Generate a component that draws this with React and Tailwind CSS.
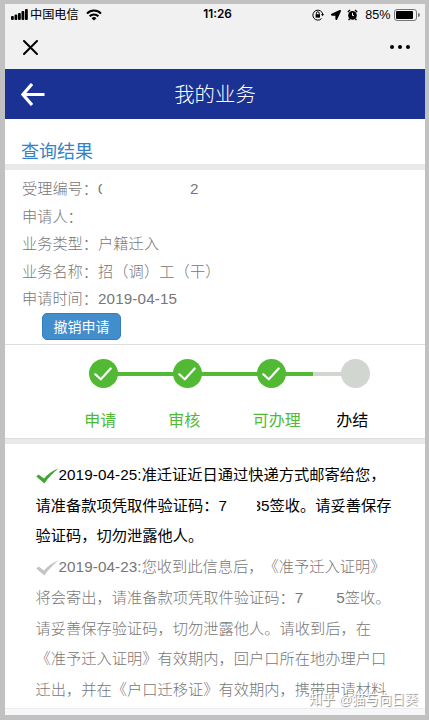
import { FaLocationArrow } from 'react-icons/fa';

const details = [
  { label: '业务类型', value: '户籍迁入' },
  { label: '业务名称', value: '招（调）工（干）' },
  { label: '申请时间', value: '2019-04-15' },
];

const steps = [
  { label: '申请', done: true },
  { label: '审核', done: true },
  { label: '可办理', done: true },
  { label: '办结', done: false },
];

const StatusBar = () => (
  <div className="flex h-[22px] items-center justify-between pl-[6px] pr-[5px] text-black">
    <div className="flex w-[150px] items-center">
      <svg width="17" height="11" viewBox="0 0 17 11" fill="currentColor">
        <rect x="0" y="7" width="2.8" height="4" rx="1" />
        <rect x="3.5" y="5.5" width="2.8" height="5.5" rx="1" />
        <rect x="7" y="4" width="2.8" height="7" rx="1" />
        <rect x="10.5" y="2" width="2.8" height="9" rx="1" />
        <rect x="14" y="0" width="2.8" height="11" rx="1" />
      </svg>
      <span className="ml-[2px] mt-px text-[12.2px] leading-none">中国电信</span>
      <svg className="ml-[7px]" width="16" height="12" viewBox="0 0 16 12" fill="none" stroke="currentColor" strokeWidth="2">
        <path d="M1 4.6 C5 0.6 11 0.6 15 4.6" />
        <path d="M3.6 7.3 C6 4.9 10 4.9 12.4 7.3" />
        <path d="M5.6 9.2 Q8 7 10.4 9.2 L8 11.6 Z" fill="currentColor" stroke="none" />
      </svg>
    </div>
    <span className="ml-[4px] font-['Inter'] text-[11.8px] font-semibold leading-none">11:26</span>
    <div className="flex w-[150px] items-center justify-end">
      <svg width="12" height="12" viewBox="0 0 12 12" fill="none" stroke="currentColor">
        <path d="M9.5 9.6 A5 5 0 1 1 10.8 5.3" />
        <path d="M9 5 H12 L10.6 7.2 Z" fill="currentColor" stroke="none" />
        <rect x="3.6" y="5.2" width="4.4" height="3.4" fill="currentColor" stroke="none" />
        <path d="M4.4 5.4 V4.2 A1.4 1.4 0 0 1 7.2 4.2 V5.4" />
      </svg>
      <FaLocationArrow className="ml-[7px] size-[10px]" />
      <svg className="ml-[6px]" width="11" height="12" viewBox="0 0 11 12">
        <circle cx="5.5" cy="6.4" r="4.3" fill="currentColor" />
        <path d="M0.8 3 L3 1 M10.2 3 L8 1 M2.6 9.6 L1.6 11.1 M8.4 9.6 L9.4 11.1" stroke="currentColor" strokeWidth="1.3" />
        <path d="M5.5 3.8 V6.6 H7" fill="none" stroke="#f1f1f1" strokeWidth="1" />
      </svg>
      <span className="ml-[7px] text-[12.6px] leading-none">85%</span>
      <div className="ml-[4px] flex items-center">
        <div className="h-[12px] w-[23px] rounded-[3px] border border-[#777] p-px">
          <div className="h-full w-[17px] rounded-[1px] bg-black" />
        </div>
        <div className="ml-px h-[4px] w-[1.5px] rounded-r bg-[#777]" />
      </div>
    </div>
  </div>
);

const StepIcon = ({ done }) => (
  <div className={`relative flex size-[29px] items-center justify-center rounded-full ${done ? 'bg-[#51b933]' : 'bg-[#d1d6d0]'}`}>
    {done && (
      <svg width="18" height="14" viewBox="0 0 18 14" fill="none" stroke="#fff" strokeWidth="2.2" strokeLinecap="round" strokeLinejoin="round">
        <path d="M1.3 7.3 L6.8 12.3 L16.7 1.5" />
      </svg>
    )}
  </div>
);

const Tick = ({ className }) => (
  <svg className={`inline-block align-[-4px] ${className}`} width="23" height="16" viewBox="0 0 23 16" fill="currentColor">
    <path d="M0.3 8.4 L2.6 6.6 L8 10.6 C12 6 16.5 2.6 22.7 0.3 C17 5 12.4 9.8 8.3 15.6 Z" />
  </svg>
);

const App = () => {
  return (
    <div lang="zh-CN" className="flex h-[720px] w-[429px] flex-col border-t-4 border-r-4 border-b-[5px] border-l-[5px] border-[#c1c1c1] bg-white font-['Liberation_Sans','Noto_Sans_CJK_SC',sans-serif] [text-spacing-trim:space-all]">
      <div className="h-[65px] shrink-0 bg-[#f1f1f1]">
        <StatusBar />
        <div className="flex h-[42px] items-center justify-between pl-[18px] pr-[15px] text-black">
          <svg width="15" height="15" viewBox="0 0 15 15" stroke="currentColor" strokeWidth="2" strokeLinecap="round">
            <path d="M1 1 L14 14 M14 1 L1 14" />
          </svg>
          <div className="flex gap-[4px]">
            <span className="size-[4px] rounded-full bg-black" />
            <span className="size-[4px] rounded-full bg-black" />
            <span className="size-[4px] rounded-full bg-black" />
          </div>
        </div>
      </div>

      <header className="flex h-[50px] shrink-0 items-center bg-[#193294] pl-[16px] pr-[16px] text-white">
        <svg width="24" height="23" viewBox="0 0 24 23" fill="none" stroke="currentColor" strokeWidth="3.2">
          <path d="M11 1 L2 11.5 L11 22 M2 11.5 H23.5" />
        </svg>
        <h1 className="flex-1 pr-[24px] pt-[2px] text-center text-[20.4px] font-light leading-none">我的业务</h1>
      </header>

      <h2 className="h-[45px] shrink-0 pl-[16px] pt-[19px] text-[18px] leading-[28px] text-[#3583c4]">查询结果</h2>
      <div className="h-[6px] shrink-0 bg-[#e9e9e9]" />

      <section className="h-[175px] shrink-0 border-b border-[#dedede] pl-[17px] pt-[5px] text-[15.2px] font-light leading-[27.6px] text-[#777]">
        <div className="flex">
          受理编号：
          <span className="w-[4px] overflow-hidden">0</span>
          <span className="ml-[88px]">2</span>
        </div>
        <div>申请人：</div>
        {details.map((item) => (
          <div key={item.label}>
            {item.label}：<span className="tracking-[0.15px]">{item.value}</span>
          </div>
        ))}
        <button className="ml-[20px] block h-[27px] w-[79px] rounded-[5px] border border-[#357ebd] bg-[#428ecd] text-[14px] font-normal leading-[26px] text-white">
          撤销申请
        </button>
      </section>

      <section className="h-[93px] shrink-0 pt-[14px]">
        <div className="relative flex pl-[54px]">
          <div className="absolute left-[98px] top-[12.5px] flex h-[4px] w-[253px]">
            <div className="w-[210px] bg-[#51b933]" />
            <div className="flex-1 bg-[#d1d6d0]" />
          </div>
          {steps.map((step) => (
            <div key={step.label} className="flex w-[84px] flex-col items-center pl-[4.5px]">
              <StepIcon done={step.done} />
              <span className={`mt-[21px] whitespace-nowrap text-[16px] leading-[24px] ${step.label === '可办理' ? 'ml-[11px]' : '-ml-[6px]'} ${step.done ? 'text-[#51b933]' : 'text-black'}`}>
                {step.label}
              </span>
            </div>
          ))}
        </div>
      </section>
      <div className="h-[6px] shrink-0 border-t border-[#dedede] bg-[#e9e9e9]" />

      <section className="relative h-[264px] shrink-0 overflow-hidden whitespace-nowrap pl-[30.5px] pt-[16px] text-[15.25px] leading-[30.7px]">
        <div className="text-black">
          <div><Tick className="text-[#43a535]" /><span className="tracking-[0.08px]">2019-04-25:</span>准迁证近日通过快递方式邮寄给您，</div>
          <div className="flex">
            请准备款项凭取件验证码：7
            <span className="ml-[30px] flex w-[4px] justify-end overflow-hidden">3</span>
            5签收。请妥善保存
          </div>
          <div>验证码，切勿泄露他人。</div>
        </div>
        <div className="font-light text-[#777]">
          <div><Tick className="text-[#c4c4c4]" /><span className="tracking-[0.08px]">2019-04-23:</span>您收到此信息后，《准予迁入证明》</div>
          <div className="flex">
            将会寄出，请准备款项凭取件验证码：7
            <span className="ml-[33px]">5签收。</span>
          </div>
          <div>请妥善保存验证码，切勿泄露他人。请收到后，在</div>
          <div>《准予迁入证明》有效期内，回户口所在地办理户口</div>
          <div>迁出，并在《户口迁移证》有效期内，携带申请材料</div>
        </div>
        <span className="absolute -bottom-px right-[7px] text-[13.2px] leading-[18px] text-white [text-shadow:1px_1px_1px_#888]">
          知乎 @猫与向日葵
        </span>
      </section>
      <div className="min-h-0 flex-1 border-t border-[#ececee] bg-[#f6f7f9]" />
    </div>
  );
};

export default App;
